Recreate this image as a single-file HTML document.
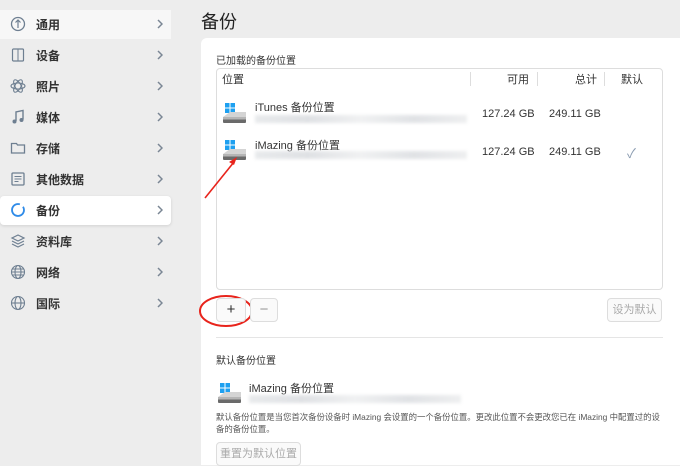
<!DOCTYPE html><html><head><meta charset="utf-8"><style>
*{margin:0;padding:0;box-sizing:border-box}
body{width:680px;height:465px;overflow:hidden;background:#ededed;font-family:"Liberation Sans","Noto Sans CJK SC",sans-serif;position:relative;color:#222}
.it{position:absolute;left:0;width:171px;height:29px;font-size:12px;font-weight:bold;color:#333}
.it.sel{background:#fff;border-radius:4px;box-shadow:0 1px 3px rgba(0,0,0,.12)}
.it.first{background:#f7f7f7}
.it span.t{position:absolute;left:36px;top:6px}
.it svg{position:absolute;left:10px;top:6px}
.it .ch{position:absolute;left:157px;top:9px}
.a{position:absolute}
.card{position:absolute;left:201px;top:38px;width:479px;height:427px;background:#fff;border-radius:6px 0 0 0}
.btn{position:absolute;border:1px solid #ddd;border-radius:4px;background:#fafafa;font-size:11px;color:#aaa;text-align:center}
.blur{position:absolute;height:8px;background:linear-gradient(90deg,#e8eaec,#dfe1e4,#f0f1f2,#e0e2e5,#eeeff0);filter:blur(1.5px)}
.num{position:absolute;font-size:11px;color:#333}
</style></head><body>
<svg width="0" height="0" style="position:absolute"><defs><symbol id="c" viewBox="0 0 6 10"><path d="M1 1l4 4-4 4" fill="none" stroke="#7a8694" stroke-width="1.5"/></symbol><symbol id="d" viewBox="0 0 24 22"><rect x="2" y="0" width="4.5" height="4.5" fill="#1ea0f0"/><rect x="7.5" y="0" width="4.5" height="4.5" fill="#1ea0f0"/><rect x="2" y="5.5" width="4.5" height="4.5" fill="#1ea0f0"/><rect x="7.5" y="5.5" width="4.5" height="4.5" fill="#1ea0f0"/><path d="M0 14l7-5h16v7H0z" fill="#d4d4d4"/><rect x="0" y="14" width="23" height="6" rx="1" fill="#6a6a6a"/><rect x="0" y="14" width="23" height="2.5" fill="#b5b5b5"/></symbol></defs></svg>
<div class="it first" style="top:10px"><svg width="16" height="16" viewBox="0 0 16 16"><circle cx="8" cy="8" r="6.5" fill="none" stroke="#6e7f91" stroke-width="1.3"/><path d="M8 4v8M5.5 6.5L8 4l2.5 2.5" fill="none" stroke="#6e7f91" stroke-width="1.2"/></svg><span class="t">通用</span><svg class="ch" width="6" height="10"><use href="#c"/></svg></div>
<div class="it" style="top:41px"><svg width="16" height="16" viewBox="0 0 16 16"><rect x="2.5" y="2" width="11" height="12" rx="1" fill="none" stroke="#6e7f91" stroke-width="1.2"/><path d="M8 2v12" stroke="#6e7f91"/></svg><span class="t">设备</span><svg class="ch" width="6" height="10"><use href="#c"/></svg></div>
<div class="it" style="top:72px"><svg width="16" height="16" viewBox="0 0 16 16"><g fill="none" stroke="#6e7f91" stroke-width="1.1"><ellipse cx="8" cy="8" rx="7" ry="3"/><ellipse cx="8" cy="8" rx="7" ry="3" transform="rotate(60 8 8)"/><ellipse cx="8" cy="8" rx="7" ry="3" transform="rotate(120 8 8)"/></g></svg><span class="t">照片</span><svg class="ch" width="6" height="10"><use href="#c"/></svg></div>
<div class="it" style="top:103px"><svg width="16" height="16" viewBox="0 0 16 16"><path d="M6 12V3l7-1.5v9" fill="none" stroke="#6e7f91" stroke-width="1.4"/><circle cx="4.5" cy="12.5" r="2" fill="#6e7f91"/><circle cx="11.5" cy="11" r="2" fill="#6e7f91"/></svg><span class="t">媒体</span><svg class="ch" width="6" height="10"><use href="#c"/></svg></div>
<div class="it" style="top:134px"><svg width="16" height="16" viewBox="0 0 16 16"><path d="M1.5 3.5h5l1 1.5h7v8h-13z" fill="none" stroke="#6e7f91" stroke-width="1.3"/></svg><span class="t">存储</span><svg class="ch" width="6" height="10"><use href="#c"/></svg></div>
<div class="it" style="top:165px"><svg width="16" height="16" viewBox="0 0 16 16"><rect x="2" y="2" width="12" height="12" rx="1" fill="none" stroke="#6e7f91" stroke-width="1.3"/><path d="M4.5 5.5h7M4.5 8h7M4.5 10.5h4" stroke="#6e7f91"/></svg><span class="t">其他数据</span><svg class="ch" width="6" height="10"><use href="#c"/></svg></div>
<div class="it sel" style="top:196px"><svg width="16" height="16" viewBox="0 0 16 16"><circle cx="8" cy="8" r="6" fill="none" stroke="#2f8be8" stroke-width="1.8" stroke-dasharray="30 4"/></svg><span class="t">备份</span><svg class="ch" width="6" height="10"><use href="#c"/></svg></div>
<div class="it" style="top:227px"><svg width="16" height="16" viewBox="0 0 16 16"><path d="M8 2l6 3-6 3-6-3z M2 8l6 3 6-3 M2 11l6 3 6-3" fill="none" stroke="#6e7f91" stroke-width="1.2"/></svg><span class="t">资料库</span><svg class="ch" width="6" height="10"><use href="#c"/></svg></div>
<div class="it" style="top:258px"><svg width="16" height="16" viewBox="0 0 16 16"><g fill="none" stroke="#6e7f91" stroke-width="1.1"><circle cx="8" cy="8" r="6.5"/><ellipse cx="8" cy="8" rx="3" ry="6.5"/><path d="M1.5 8h13M2.5 5h11M2.5 11h11"/></g></svg><span class="t">网络</span><svg class="ch" width="6" height="10"><use href="#c"/></svg></div>
<div class="it" style="top:289px"><svg width="16" height="16" viewBox="0 0 16 16"><g fill="none" stroke="#6e7f91" stroke-width="1.1"><circle cx="8" cy="8" r="6.5"/><ellipse cx="8" cy="8" rx="3" ry="6.5"/><path d="M1.5 8h13"/></g></svg><span class="t">国际</span><svg class="ch" width="6" height="10"><use href="#c"/></svg></div>

<div class="a" style="left:201px;top:8px;font-size:18px;color:#222">备份</div>
<div class="card"></div>
<div class="a" style="left:216px;top:52px;font-size:10px;color:#333">已加载的备份位置</div>
<div class="a" style="left:216px;top:68px;width:447px;height:222px;border:1px solid #ddd;border-radius:4px"></div>
<div class="a" style="left:222px;top:71px;font-size:11px;color:#333">位置</div>
<div class="a" style="left:470px;top:72px;width:1px;height:14px;background:#ddd"></div>
<div class="a" style="left:537px;top:72px;width:1px;height:14px;background:#ddd"></div>
<div class="a" style="left:604px;top:72px;width:1px;height:14px;background:#ddd"></div>
<div class="a" style="left:507px;top:71px;font-size:11px;color:#333">可用</div>
<div class="a" style="left:575px;top:71px;font-size:11px;color:#333">总计</div>
<div class="a" style="left:621px;top:71px;font-size:11px;color:#333">默认</div>

<svg class="a" style="left:223px;top:103px" width="24" height="22"><use href="#d"/></svg>
<div class="a" style="left:255px;top:99px;font-size:11px;color:#333">iTunes 备份位置</div>
<div class="blur" style="left:255px;top:115px;width:212px"></div>
<div class="num" style="left:482px;top:108px">127.24 GB</div>
<div class="num" style="left:549px;top:108px">249.11 GB</div>

<svg class="a" style="left:223px;top:140px" width="24" height="22"><use href="#d"/></svg>
<div class="a" style="left:255px;top:137px;font-size:11px;color:#333">iMazing 备份位置</div>
<div class="blur" style="left:255px;top:151px;width:212px"></div>
<div class="num" style="left:482px;top:146px">127.24 GB</div>
<div class="num" style="left:549px;top:146px">249.11 GB</div>
<div class="a" style="left:627px;top:143px;font-size:13px;color:#8a9bb0">✓</div>

<svg class="a" style="left:0;top:0" width="680" height="465"><path d="M205 198L234 162" stroke="#e8241c" stroke-width="1.6"/><path d="M237 157l-8 5 5 3z" fill="#e8241c"/><ellipse cx="226" cy="311" rx="26" ry="15" fill="none" stroke="#e8241c" stroke-width="2"/></svg>
<div class="btn" style="left:216px;top:298px;width:30px;height:24px;font-size:15px;color:#333;line-height:21px">+</div>
<div class="btn" style="left:250px;top:298px;width:28px;height:24px;font-size:15px;color:#999;line-height:21px">−</div>
<div class="btn" style="left:607px;top:298px;width:55px;height:24px;line-height:22px">设为默认</div>

<div class="a" style="left:216px;top:337px;width:447px;height:1px;background:#e5e5e5"></div>
<div class="a" style="left:216px;top:352px;font-size:10px;color:#333">默认备份位置</div>
<svg class="a" style="left:218px;top:383px" width="24" height="22"><use href="#d"/></svg>
<div class="a" style="left:249px;top:380px;font-size:11px;color:#333">iMazing 备份位置</div>
<div class="blur" style="left:249px;top:395px;width:212px"></div>
<div class="a" style="left:216px;top:411px;width:450px;font-size:8.4px;line-height:12px;color:#555">默认备份位置是当您首次备份设备时 iMazing 会设置的一个备份位置。更改此位置不会更改您已在 iMazing 中配置过的设备的备份位置。</div>
<div class="btn" style="left:216px;top:442px;width:85px;height:24px;line-height:22px">重置为默认位置</div>
</body></html>
